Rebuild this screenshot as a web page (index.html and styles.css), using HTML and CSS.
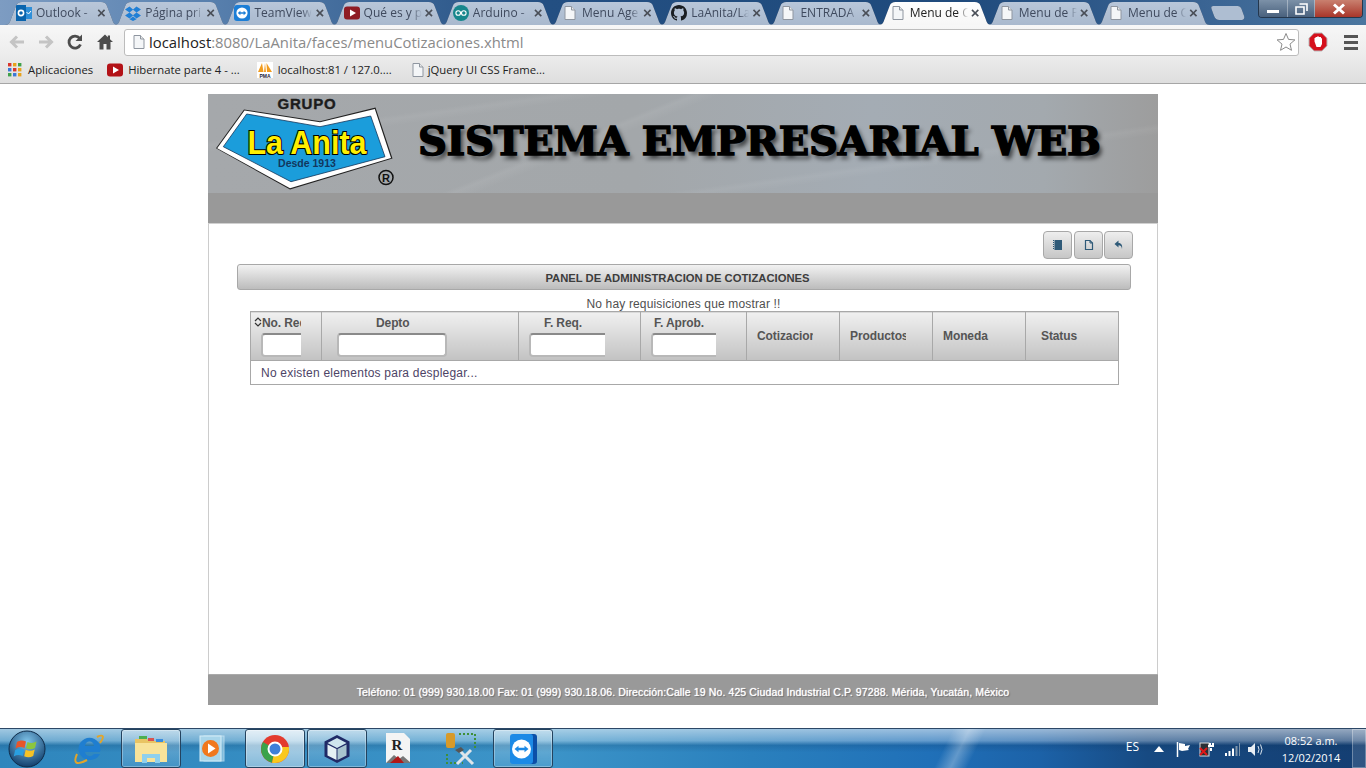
FILE: index.html
```html
<!DOCTYPE html>
<html lang="es">
  <head>
    <meta charset="UTF-8" />
    <title>Menu de Cotizaciones</title>
    <link rel="stylesheet" href="styles.css">
  </head>
  <body>
    <svg class="defs" width="0" height="0">
      <symbol id="doc" viewBox="0 0 16 16">
        <path d="M3 1.500h6.500L13 5v9.500H3z" fill="#f4f6f8" stroke="#8f96a0"/>
        <path d="M9.500 1.500V5H13" fill="#e8e8e8" stroke="#8f96a0"/>
      </symbol>
    </svg>

    <!-- browser tabs -->
    <div class="titlebar">
      <div class="tabs">
        <div class="tab">
          <svg class="fav" viewBox="0 0 16 16"><rect x="6" y="2" width="10" height="12" fill="#2f8fd8"/><rect width="10" height="16" y="0" fill="#0a64ad"/><circle cx="5" cy="8" r="2.600" fill="none" stroke="#fff" stroke-width="1.600"/><path d="M10.500 7l2 2 2.500-3" fill="none" stroke="#fff"/></svg>
          <span class="tab-title">Outlook - </span><span class="tab-x">×</span>
        </div>
        <div class="tab">
          <svg class="fav" viewBox="0 0 16 16"><path d="M4.500 1.500L0 4.500l4.500 3-4.500 3 4.500 3L8 10.500l3.500 3 4.500-3-4.500-3 4.500-3-4.500-3L8 4.500zM8 4.700l3.500 2.800L8 10.300 4.500 7.500z" fill="#1f7fd6"/><path d="M4.500 14.300L8 11.500l3.500 2.800L8 16z" fill="#1f7fd6"/></svg>
          <span class="tab-title">Página pri</span><span class="tab-x">×</span>
        </div>
        <div class="tab">
          <svg class="fav" viewBox="0 0 16 16"><rect width="16" height="16" rx="3" fill="#1c7ed6"/><circle cx="8" cy="8" r="5.600" fill="#fff"/><path d="M3.800 8l2.600-2.200v1.400h3.200V5.800L12.200 8 9.600 10.200V8.800H6.400v1.400z" fill="#1c7ed6"/></svg>
          <span class="tab-title">TeamView</span><span class="tab-x">×</span>
        </div>
        <div class="tab">
          <svg class="fav" viewBox="0 0 16 16"><rect y="1.500" width="16" height="13" rx="3" fill="#8f1c24"/><path d="M6 4.500l6 3.500-6 3.500z" fill="#fff"/></svg>
          <span class="tab-title">Qué es y p</span><span class="tab-x">×</span>
        </div>
        <div class="tab">
          <svg class="fav" viewBox="0 0 16 16"><circle cx="8" cy="8" r="8" fill="#17868c"/><circle cx="5.200" cy="8" r="2.300" fill="none" stroke="#fff" stroke-width="1.100"/><circle cx="10.800" cy="8" r="2.300" fill="none" stroke="#fff" stroke-width="1.100"/></svg>
          <span class="tab-title">Arduino - </span><span class="tab-x">×</span>
        </div>
        <div class="tab"><svg class="fav"><use href="#doc"/></svg><span class="tab-title">Menu Age</span><span class="tab-x">×</span></div>
        <div class="tab">
          <svg class="fav" viewBox="0 0 16 16"><path fill="#1b1f23" d="M8 0C3.580 0 0 3.580 0 8c0 3.540 2.290 6.530 5.470 7.590.4.070.55-.17.55-.38 0-.19-.01-.82-.01-1.490-2.010.37-2.530-.49-2.690-.94-.09-.23-.48-.94-.82-1.130-.28-.15-.68-.52-.01-.53.63-.01 1.080.58 1.230.82.72 1.210 1.870.87 2.330.66.070-.52.28-.87.51-1.070-1.780-.2-3.640-.89-3.640-3.950 0-.87.31-1.590.82-2.150-.08-.2-.36-1.020.08-2.120 0 0 .67-.21 2.200.82.64-.18 1.320-.27 2-.27.68 0 1.360.09 2 .27 1.530-1.040 2.200-.82 2.200-.82.44 1.100.16 1.920.08 2.120.51.56.82 1.270.82 2.150 0 3.070-1.870 3.750-3.650 3.950.29.25.54.73.54 1.480 0 1.070-.01 1.930-.01 2.200 0 .21.15.46.55.38A8.013 8.013 0 0016 8c0-4.420-3.580-8-8-8z"/></svg>
          <span class="tab-title">LaAnita/La</span><span class="tab-x">×</span>
        </div>
        <div class="tab"><svg class="fav"><use href="#doc"/></svg><span class="tab-title">ENTRADA</span><span class="tab-x">×</span></div>
        <div class="tab active"><svg class="fav"><use href="#doc"/></svg><span class="tab-title">Menu de C</span><span class="tab-x">×</span></div>
        <div class="tab"><svg class="fav"><use href="#doc"/></svg><span class="tab-title">Menu de P</span><span class="tab-x">×</span></div>
        <div class="tab"><svg class="fav"><use href="#doc"/></svg><span class="tab-title">Menu de C</span><span class="tab-x">×</span></div>
        <div class="new-tab"></div>
      </div>
      <div class="win-controls">
        <div class="win-btn win-min"><span></span></div>
        <div class="win-btn win-max">
          <svg width="13" height="12" viewBox="0 0 13 12"><path d="M4.500 1h7.500v7M1 4h8v7H1z" fill="none" stroke="#fff" stroke-width="1.600"/></svg>
        </div>
        <div class="win-btn win-close">
          <svg width="18" height="12" viewBox="0 0 18 12"><path d="M4 1.500l10 9M14 1.500l-10 9" stroke="#fff" stroke-width="3"/></svg>
        </div>
      </div>
    </div>

    <!-- toolbar -->
    <div class="toolbar">
      <svg class="nav-icon" viewBox="0 0 20 20"><path d="M17 10H5M10 4.500L4.500 10l5.500 5.500" fill="none" stroke="#c4c4c4" stroke-width="3"/></svg>
      <svg class="nav-icon" viewBox="0 0 20 20"><path d="M3 10h12M10 4.500l5.500 5.500-5.500 5.500" fill="none" stroke="#c4c4c4" stroke-width="3"/></svg>
      <svg class="nav-icon" viewBox="0 0 20 20"><path d="M15.500 12.500a6 6 0 1 1-.8-6.200" fill="none" stroke="#4c4c4c" stroke-width="2.800"/><path d="M17 2.500V9h-6.500z" fill="#4c4c4c"/></svg>
      <svg class="nav-icon home-icon" viewBox="0 0 20 20"><path d="M10 2.500L2 10h2.500v7.500h4V12h3v5.500h4V10H18l-3-2.800V3.500h-2.200v1.700z" fill="#4c4c4c"/></svg>
      <div class="omnibox">
        <svg class="omni-doc"><use href="#doc"/></svg>
        <span class="url"><b>localhost</b>:8080/LaAnita/faces/menuCotizaciones.xhtml</span>
        <svg class="star" viewBox="0 0 20 20"><path d="M10 1.500l2.500 5.900 6.400.5-4.900 4.200 1.500 6.200L10 15l-5.500 3.300L6 12.100 1.100 7.900l6.400-.5z" fill="#fff" stroke="#8a8a8a"/></svg>
      </div>
      <svg class="adblock" viewBox="0 0 20 20"><path d="M6.200 1h7.600L19 6.200v7.600L13.800 19H6.200L1 13.800V6.200z" fill="#d5101c" stroke="#b9b9b9"/><path d="M6.500 9.500V6h1V5h1.500v-.500h2V5H13v1.200h1v5.800l-1.500 3h-4z" fill="#fff"/></svg>
      <div class="menu-icon"><span></span><span></span><span></span></div>
    </div>

    <!-- bookmarks -->
    <div class="bookmarks">
      <div class="bookmark bm-apps">
        <svg class="bm-ico" viewBox="0 0 14 14">
          <rect width="3.400" height="3.400" fill="#d9352c"/><rect x="5" width="3.400" height="3.400" fill="#e8a21c"/><rect x="10" width="3.400" height="3.400" fill="#3fa14a"/>
          <rect y="5" width="3.400" height="3.400" fill="#3a78d8"/><rect x="5" y="5" width="3.400" height="3.400" fill="#d9352c"/><rect x="10" y="5" width="3.400" height="3.400" fill="#e8a21c"/>
          <rect y="10" width="3.400" height="3.400" fill="#3fa14a"/><rect x="5" y="10" width="3.400" height="3.400" fill="#3a78d8"/><rect x="10" y="10" width="3.400" height="3.400" fill="#e8a21c"/>
        </svg>
        Aplicaciones
      </div>
      <div class="bookmark bm-yt">
        <svg class="bm-ico" viewBox="0 0 16 16"><rect y="1.500" width="16" height="13" rx="3" fill="#b31217"/><path d="M6 4.500l6 3.500-6 3.500z" fill="#fff"/></svg>
        Hibernate parte 4 - ...
      </div>
      <div class="bookmark bm-pma">
        <svg class="bm-ico" viewBox="0 0 16 16"><rect width="16" height="16" fill="#fff"/><path d="M1 10L5 1l1.500 9zM7 10l1-9 1 9zM10 10L9.500 1 15 10z" fill="#f29c1f"/><text x="8" y="15.500" class="pma-text">PMA</text></svg>
        localhost:81 / 127.0....
      </div>
      <div class="bookmark bm-jq"><svg class="bm-ico"><use href="#doc"/></svg>jQuery UI CSS Frame...</div>
    </div>

    <!-- page -->
    <div class="viewport">
      <div class="page">
        <header class="banner">
          <svg class="logo" width="190" height="99" viewBox="0 0 190 99">
            <text x="99" y="15" class="logo-grupo">GRUPO</text>
            <path d="M8 54.300L36 15.500 112 27.200 167.500 13.500l17 51L82 95.500z" fill="#222"/>
            <path d="M9.200 54.300L36.500 16.500 112 28.200 166.800 14.900l16.200 49L82 94.200z" fill="#fff"/>
            <path d="M15.300 52.700L38.700 20 112 32.700 162.700 22 177 62.700 83 87.700z" fill="#1b9ddb" stroke="#14365a" stroke-width=".8"/>
            <text x="99" y="59.500" class="logo-name" textLength="119" lengthAdjust="spacingAndGlyphs">La Anita</text>
            <text x="99" y="73" class="logo-since">Desde 1913</text>
            <circle cx="178" cy="83.500" r="7" fill="none" stroke="#111" stroke-width="1.500"/>
            <text x="178" y="87.500" class="logo-reg">R</text>
          </svg>
          <h1 class="banner-title">SISTEMA EMPRESARIAL WEB</h1>
        </header>
        <div class="subbar"></div>

        <main class="content">
          <div class="actions">
            <button class="act-btn">
              <svg viewBox="0 0 12 12"><rect x="2.500" y="1" width="7.500" height="10" fill="#2f5a78"/><path d="M1.500 1v10" stroke="#2f5a78" stroke-dasharray="1 1"/></svg>
            </button>
            <button class="act-btn">
              <svg viewBox="0 0 12 12"><path d="M2.500 1.500h4.500l2.500 2.500v6.500h-7z" fill="none" stroke="#2f5a78" stroke-width="1.200"/><path d="M7 1.500V4h2.500" fill="none" stroke="#2f5a78"/></svg>
            </button>
            <button class="act-btn">
              <svg viewBox="0 0 12 12"><path d="M5.500 1.500L1.500 5l4 3.500V6.300c2 0 3 .7 3.500 3.700.7-3.500-.5-6-3.500-6z" fill="#2f5a78"/></svg>
            </button>
          </div>

          <h2 class="panel-head">PANEL DE ADMINISTRACION DE COTIZACIONES</h2>
          <p class="notice">No hay requisiciones que mostrar !!</p>

          <table class="grid">
            <colgroup>
              <col class="c-req"><col class="c-depto"><col class="c-freq"><col class="c-faprob">
              <col class="c-std"><col class="c-std"><col class="c-std"><col class="c-std">
            </colgroup>
            <thead>
              <tr>
                <th>
                  <div class="filter f-req">
                    <span class="col-name"><svg class="sort" viewBox="0 0 8 10"><path d="M1 4l3-3 3 3M1 6l3 3 3-3" fill="none" stroke="#333" stroke-width="1.200"/></svg>No. Req</span>
                    <input class="filter-in" type="text">
                  </div>
                </th>
                <th>
                  <div class="filter f-depto">
                    <span class="col-name">Depto</span>
                    <input class="filter-in" type="text">
                  </div>
                </th>
                <th>
                  <div class="filter f-freq">
                    <span class="col-name">F. Req.</span>
                    <input class="filter-in" type="text">
                  </div>
                </th>
                <th>
                  <div class="filter f-faprob">
                    <span class="col-name">F. Aprob.</span>
                    <input class="filter-in" type="text">
                  </div>
                </th>
                <th><div class="plain p-clip">Cotizacion</div></th>
                <th><div class="plain p-clip">Productos</div></th>
                <th><div class="plain">Moneda</div></th>
                <th><div class="plain p-status">Status</div></th>
              </tr>
            </thead>
            <tbody>
              <tr><td colspan="8">No existen elementos para desplegar...</td></tr>
            </tbody>
          </table>
        </main>

        <footer class="page-foot">Teléfono: 01 (999) 930.18.00 Fax: 01 (999) 930.18.06. Dirección:Calle 19 No. 425 Ciudad Industrial C.P. 97288. Mérida, Yucatán, México</footer>
      </div>
    </div>

    <!-- windows taskbar -->
    <div class="taskbar">
      <div class="orb">
        <svg width="38" height="38" viewBox="0 0 38 38">
          <defs>
            <radialGradient id="orbFill" cx="50%" cy="30%" r="70%"><stop offset="0" stop-color="#7fc4ea"/><stop offset="1" stop-color="#123f6d"/></radialGradient>
          </defs>
          <circle cx="19" cy="19" r="18" fill="url(#orbFill)" stroke="#0f2c4a"/>
          <path d="M9 12c3-2 6-2 9-.5L16.500 18c-3-1.300-6-1.300-9 .5z" fill="#e8562a"/>
          <path d="M19.500 12c3 1.300 6 1.300 9-.5L27 18c-3 1.500-6 1.500-9 .3z" fill="#8cc63f"/>
          <path d="M7.200 20c3-1.700 6-1.700 9-.5L14.700 26c-3-1.300-6-1.300-9 .5z" fill="#2a9fe0"/>
          <path d="M17.700 19.800c3 1.300 6 1.300 9-.3L25.200 26c-3 1.500-6 1.500-9 .3z" fill="#f7c325"/>
        </svg>
      </div>
      <div class="task-slot ie-slot">
        <svg width="32" height="34" viewBox="0 0 32 34">
          <path d="M6 20a11 11 0 1 1 21 0H12a5 5 0 0 0 9 2h6a11.500 11.500 0 0 1-21-2zM12 14h9a4.500 4.500 0 0 0-9 0z" fill="#1f7ed0" fill-rule="evenodd"/>
          <path d="M24 5c6-3 8-1 3 6M4 22C0 31 3 34 14 28" fill="none" stroke="#e2a52a" stroke-width="2"/>
        </svg>
      </div>
      <div class="task-slot open">
        <svg width="34" height="30" viewBox="0 0 34 30">
          <path d="M1 5h12l2 2h16v21H1z" fill="#e9c463"/>
          <path d="M1 9h32v19H1z" fill="#f8e39a"/>
          <rect x="5" y="2" width="8" height="3" fill="#4caf50"/><rect x="14" y="4" width="6" height="3" fill="#d9534f"/><rect x="22" y="5" width="7" height="3" fill="#3a8dde"/>
          <path d="M8 29v-9h18v9h-5v-5h-8v5z" fill="#8ed0ee"/>
        </svg>
      </div>
      <div class="task-slot">
        <svg width="30" height="30" viewBox="0 0 30 30">
          <rect x="6" y="2" width="20" height="25" fill="#9fd0e8" opacity=".7" stroke="#d5edf8"/>
          <rect x="2" y="2" width="21" height="25" fill="#a8d5ea" stroke="#d5edf8"/>
          <circle cx="12.500" cy="14.500" r="8.500" fill="#f0781e"/>
          <path d="M10 9.500l7.500 5-7.500 5z" fill="#fff"/>
        </svg>
      </div>
      <div class="task-slot open active-app">
        <svg width="30" height="30" viewBox="0 0 30 30">
          <circle cx="15" cy="15" r="14" fill="#e33b2e"/>
          <path d="M15 15L3 8A14 14 0 0 0 12 28.700z" fill="#3aa34a"/>
          <path d="M15 15l-3 13.700A14 14 0 0 0 28.900 13H15z" fill="#f9c81e"/>
          <circle cx="15" cy="15" r="6.500" fill="#3f7fd9" stroke="#fff" stroke-width="2"/>
        </svg>
      </div>
      <div class="task-slot open">
        <svg width="32" height="32" viewBox="0 0 32 32">
          <path d="M16 2l12.500 6.500v15L16 30 3.500 23.500v-15z" fill="#1f2a66"/>
          <path d="M16 5l9.500 5L16 15 6.500 10z" fill="#cfe6ee"/>
          <path d="M6.500 11.500L15.500 16v11L6.500 22.500z" fill="#e6f1f4"/>
          <path d="M25.500 11.500L16.500 16v11l9-4.500z" fill="#a9c4cf"/>
        </svg>
      </div>
      <div class="task-slot">
        <svg width="30" height="36" viewBox="0 0 30 36">
          <path d="M2 2h18l6 6v24H2z" fill="#f4f4f4"/>
          <text x="13" y="19" class="r-doc">R</text>
          <path d="M2 32l8-8 5 4 4-3 8 7z" fill="#777"/>
          <path d="M6 32l8-7 6 7z" fill="#b01818"/>
        </svg>
      </div>
      <div class="task-slot">
        <svg width="32" height="34" viewBox="0 0 32 34">
          <rect x="1" y="1" width="9" height="15" rx="2" fill="#d79a2a"/>
          <path d="M14 2h16v14M2 22v9h16" fill="none" stroke="#3f8f3a" stroke-width="2" stroke-dasharray="2 2"/>
          <path d="M12 32l14-14M14 18l14 14" stroke="#dfe5ea" stroke-width="3"/>
          <path d="M10 18l6-3 3 3-5 3z" fill="#555"/>
        </svg>
      </div>
      <div class="task-slot open">
        <svg width="28" height="32" viewBox="0 0 28 32">
          <rect x="4" y="1" width="24" height="30" rx="3" fill="#0b4fa8"/>
          <rect x="1" y="1" width="23" height="30" rx="3" fill="#1c8ae6"/>
          <circle cx="12.500" cy="16" r="9.500" fill="#fff"/>
          <path d="M5.500 16l4-3.300v2h6v-2l4 3.300-4 3.300v-2h-6v2z" fill="#1c8ae6"/>
        </svg>
      </div>

      <div class="tray">
        <span class="tray-lang">ES</span>
        <svg class="tray-ico tray-arrow" width="10" height="6" viewBox="0 0 10 6"><path d="M5 0l5 6H0z" fill="#fff"/></svg>
        <svg class="tray-ico tray-flag" width="16" height="15" viewBox="0 0 16 15"><path d="M1.500 0v15" stroke="#fff" stroke-width="1.500"/><path d="M3 1l6 1v2l5-1-2 4 1 1-7 1-3-1z" fill="#fff"/></svg>
        <svg class="tray-ico tray-power" width="16" height="16" viewBox="0 0 16 16"><rect x="1" y="2" width="9" height="13" fill="#2a2f36" stroke="#ddd"/><path d="M9 5h6M11 2v4M14 2v4M12 7v3" stroke="#fff" stroke-width="2"/><path d="M1 7l7 7M8 7l-7 7" stroke="#e01818" stroke-width="2"/></svg>
        <svg class="tray-ico" width="16" height="13" viewBox="0 0 16 13"><path d="M1 10h2v3H1zM4.500 8h2v5h-2zM8 5.500h2V13H8z" fill="#fff"/><path d="M11.500 3h2v10h-2zM15 0h1v13h-1z" fill="#7f95ab"/></svg>
        <svg class="tray-ico" width="15" height="15" viewBox="0 0 15 15"><path d="M0 5h3l4-4v13l-4-4H0z" fill="#e8eef4"/><path d="M10 4q2 3.500 0 7M12.500 2.500q3 5 0 10" fill="none" stroke="#dbe5ee"/></svg>
        <div class="clock"><span>08:52 a.m.</span><span>12/02/2014</span></div>
        <div class="show-desktop"></div>
      </div>
    </div>
  </body>
</html>
```

FILE: styles.css
```css
* {
  box-sizing: border-box;
}
html, body {
  margin: 0;
  height: 100%;
}
body {
  width: 1366px;
  height: 768px;
  overflow: hidden;
  display: flex;
  flex-direction: column;
  background-color: #fff;
  font-family: "Liberation Sans", Arial, sans-serif;
}
.defs {
  display: block;
  height: 0;
}

/* ---- browser chrome ---- */
.titlebar {
  height: 25px;
  flex: none;
  display: flex;
  justify-content: space-between;
  background: linear-gradient(90deg, #7d9cc2 0, #5f86b3 12%, #234f82 40%, #1f4a7c 70%, #3a6493 88%, #4b769f 100%);
}
.tabs {
  display: flex;
  align-items: flex-end;
  padding-left: 5px;
  filter: drop-shadow(0 0 .7px rgba(40, 55, 80, .9));
}
.tab {
  position: relative;
  width: 113px;
  height: 25px;
  margin-right: -3.8px;
  padding: 5px 0 0 11px;
  display: flex;
  align-items: flex-start;
  flex: none;
  background: linear-gradient(180deg, #bac8da, #a9b9ce);
  clip-path: path("M0 25C4 25 5 22 6 19L11 6C12 3 14 2 17 2L96 2C99 2 101 3 102 6L107 19C108 22 109 25 113 25Z");
}
.tab.active {
  z-index: 2;
  background: linear-gradient(180deg, #fff, #f6f6f6);
}
.fav {
  width: 16px;
  height: 16px;
  flex: none;
}
.tab-title {
  width: 58px;
  margin-left: 4px;
  font: 12px/16px "Open Sans", sans-serif;
  color: #3f4a5e;
  white-space: nowrap;
  overflow: hidden;
  -webkit-mask-image: linear-gradient(90deg, #000 82%, transparent 100%);
  mask-image: linear-gradient(90deg, #000 82%, transparent 100%);
}
.tab.active .tab-title {
  color: #222;
}
.tab-x {
  margin-left: 3px;
  font: bold 15px/16px "Liberation Sans", sans-serif;
  color: #4a4f58;
}
.new-tab {
  width: 30px;
  height: 14px;
  margin: 0 0 5px 7px;
  flex: none;
  background: #aebed2;
  border-radius: 3px 3px 4px 4px;
  transform: skewX(20deg);
}
.win-controls {
  width: 105px;
  height: 18px;
  margin-right: 3px;
  display: flex;
  border: 1px solid #24374d;
  border-top: none;
  border-radius: 0 0 4px 4px;
  overflow: hidden;
}
.win-btn {
  display: flex;
  align-items: center;
  justify-content: center;
  border-right: 1px solid rgba(255, 255, 255, .35);
  background: linear-gradient(180deg, #7c91a8, #49617d);
}
.win-min {
  width: 29px;
}
.win-min span {
  width: 12px;
  height: 3px;
  margin-top: 6px;
  background: #fff;
}
.win-max {
  width: 27px;
}
.win-close {
  flex: 1;
  border-right: none;
  background: linear-gradient(180deg, #c9806f, #a8362a);
}

.toolbar {
  height: 31px;
  flex: none;
  display: flex;
  align-items: center;
  padding: 3px 6px 0 7px;
  background: linear-gradient(180deg, #f7f7f7, #ececec);
}
.nav-icon {
  width: 20px;
  height: 20px;
  margin-right: 9px;
  flex: none;
}
.home-icon {
  margin-left: 1px;
}
.omnibox {
  flex: none;
  width: 1175px;
  height: 27px;
  display: flex;
  align-items: center;
  padding: 0 2px 0 6px;
  background: #fff;
  border: 1px solid #bcbcbc;
  border-radius: 3px;
}
.omni-doc {
  width: 16px;
  height: 16px;
  flex: none;
}
.url {
  margin-left: 2px;
  flex: 1;
  font: 14.850px/20px "Open Sans", sans-serif;
  color: #8a8a8a;
  white-space: nowrap;
}
.url b {
  font-weight: normal;
  color: #222;
}
.star {
  width: 20px;
  height: 20px;
}
.adblock {
  width: 20px;
  height: 20px;
  margin-left: 9px;
  flex: none;
}
.menu-icon {
  margin-left: 16px;
  width: 14px;
  display: flex;
  flex-direction: column;
  gap: 3px;
}
.menu-icon span {
  height: 3px;
  background: #555;
}

.bookmarks {
  height: 28px;
  flex: none;
  display: flex;
  align-items: center;
  padding-left: 8px;
  background: linear-gradient(180deg, #ececec, #dedede);
  border-bottom: 1px solid #a6a6a6;
  font: 11.300px/16px "Open Sans", sans-serif;
  color: #222;
}
.bookmark {
  display: flex;
  align-items: center;
  white-space: nowrap;
}
.bm-ico {
  width: 16px;
  height: 16px;
  margin-right: 5px;
  flex: none;
}
.bm-apps .bm-ico {
  width: 14px;
  height: 14px;
  margin-right: 6px;
}
.bm-yt {
  margin-left: 14px;
}
.bm-pma {
  margin-left: 17px;
}
.bm-jq {
  margin-left: 18px;
}
.bm-jq .bm-ico {
  margin-right: 2px;
}
.pma-text {
  font: bold 5px "Liberation Sans", sans-serif;
  text-anchor: middle;
  fill: #223;
}

/* ---- page ---- */
.viewport {
  flex: 1;
  padding-top: 10px;
  display: flex;
  justify-content: center;
  background: #fff;
}
.page {
  width: 950px;
  height: 611px;
  display: flex;
  flex-direction: column;
}
.banner {
  height: 99px;
  flex: none;
  display: flex;
  align-items: flex-start;
  background:
    linear-gradient(158deg, transparent 40%, rgba(255, 255, 255, .06) 41%, transparent 43%),
    linear-gradient(172deg, transparent 20%, rgba(255, 255, 255, .05) 22%, transparent 25%, transparent 70%, rgba(255, 255, 255, .05) 72%, transparent 75%),
    linear-gradient(90deg, #a5a8ab 0, #a3a7aa 45%, #a4acb4 70%, #a3a9ae 88%, #9d9d9d 100%);
}
.logo {
  flex: none;
}
.banner-title {
  margin: 25px 0 0 20px;
  font: bold 40px/44px "DejaVu Serif", serif;
  color: #000;
  white-space: nowrap;
  letter-spacing: -.27px;
  -webkit-text-stroke: 1.500px #000;
  text-shadow: 3px 4px 4px rgba(0, 0, 0, .6);
}
.logo-grupo {
  font: bold 15px "Liberation Sans", sans-serif;
  letter-spacing: .8px;
  text-anchor: middle;
  fill: #1c1c1c;
  stroke: #1c1c1c;
  stroke-width: .4;
}
.logo-name {
  font: bold 34px "Liberation Sans", sans-serif;
  text-anchor: middle;
  fill: #ffef00;
  stroke: #000;
  stroke-width: 2.200;
  paint-order: stroke;
}
.logo-since {
  font: bold 10.500px "Liberation Sans", sans-serif;
  text-anchor: middle;
  fill: #12375e;
}
.logo-reg {
  font: bold 11px "Liberation Sans", sans-serif;
  text-anchor: middle;
  fill: #111;
}
.subbar {
  height: 31px;
  flex: none;
  background: #999;
  border-bottom: 1px solid #d0d0d0;
}
.content {
  flex: 1;
  padding-top: 7px;
  background: #fff;
  border-left: 1px solid #ccc;
  border-right: 1px solid #ccc;
  font-size: 12px;
  color: #4f4f4f;
}
.actions {
  height: 28px;
  display: flex;
  justify-content: flex-end;
  gap: 1px;
  padding-right: 24px;
}
.act-btn {
  width: 29px;
  height: 28px;
  padding: 0;
  display: flex;
  align-items: center;
  justify-content: center;
  background: linear-gradient(180deg, #eee, #c6c6c6);
  border: 1px solid #a8a8a8;
  border-radius: 4px;
}
.act-btn:first-child {
  margin-right: 1px;
}
.act-btn svg {
  width: 12px;
  height: 12px;
}
.panel-head {
  height: 26px;
  margin: 5px 26px 0 28px;
  padding-right: 13px;
  font: bold 11.250px/26px "Liberation Sans", sans-serif;
  text-align: center;
  color: #3d3d3d;
  background: linear-gradient(180deg, #f2f2f2, #bcbcbc);
  border: 1px solid #a8a8a8;
  border-radius: 3px;
}
.notice {
  height: 21px;
  margin: 0;
  padding-top: 7px;
  font: 12px/15px "Liberation Sans", sans-serif;
  text-align: center;
  letter-spacing: .15px;
  margin-left: 1px;
}
.grid {
  width: 869px;
  margin-left: 41px;
  table-layout: fixed;
  border-collapse: collapse;
}
.c-req { width: 71px; }
.c-depto { width: 197px; }
.c-freq { width: 122px; }
.c-faprob { width: 106px; }
.c-std { width: 93px; }
.grid th {
  height: 49px;
  padding: 0;
  vertical-align: top;
  text-align: left;
  font: bold 12px/15px "Liberation Sans", sans-serif;
  letter-spacing: -.1px;
  color: #555;
  background: linear-gradient(180deg, #f0f0f0, #c2c2c2);
  border: 1px solid #a8a8a8;
}
.grid td {
  height: 24px;
  padding: 2px 0 0 10px;
  font: 12px/15px "Liberation Sans", sans-serif;
  letter-spacing: .22px;
  color: #4d4466;
  border: 1px solid #a8a8a8;
}
.filter {
  display: flex;
  flex-direction: column;
  overflow: hidden;
  padding-top: 4px;
}
.col-name {
  height: 16px;
  padding-top: 0;
  white-space: nowrap;
}
.sort {
  width: 8px;
  height: 10px;
}
.filter-in {
  height: 24px;
  flex: none;
  padding: 0;
  margin-top: 1px;
  background: #fff;
  border: 2px solid #b8b8b8;
  border-top-color: #8a8a8a;
  border-radius: 4px;
}
.f-req {
  width: 47px;
  margin-left: 3px;
}
.f-req .filter-in {
  width: 60px;
  margin-left: 7px;
}
.f-depto {
  width: 110px;
  margin-left: 15px;
}
.f-depto .col-name {
  padding-left: 39px;
}
.f-freq {
  width: 76px;
  margin-left: 10px;
}
.f-freq .col-name {
  padding-left: 15px;
}
.f-freq .filter-in {
  width: 90px;
}
.f-faprob {
  width: 65px;
  margin-left: 10px;
}
.f-faprob .col-name {
  padding-left: 3px;
}
.f-faprob .filter-in {
  width: 90px;
}
.plain {
  margin-left: 10px;
  padding-top: 1px;
  line-height: 47px;
  white-space: nowrap;
}
.p-clip {
  width: 56px;
  overflow: hidden;
}
.p-status {
  margin-left: 15px;
}
.page-foot {
  height: 31px;
  flex: none;
  font: 10.500px/34px "Liberation Sans", sans-serif;
  letter-spacing: .12px;
  color: #fff;
  text-align: center;
  background: #999;
  border-top: 1px solid #aaa;
  text-shadow: 0 0 1px #fff, 1px 1px 1px rgba(60, 60, 60, .6);
}

/* ---- taskbar ---- */
.taskbar {
  height: 40px;
  flex: none;
  display: flex;
  align-items: center;
  border-top: 1px solid #2c4766;
  background:
    linear-gradient(116deg, transparent 68.800%, rgba(255, 255, 255, .3) 70%, transparent 71.200%),
    linear-gradient(180deg, rgba(255, 255, 255, .55) 0, rgba(255, 255, 255, .3) 30%, rgba(10, 50, 90, .18) 42%, rgba(255, 255, 255, 0) 60%),
    linear-gradient(90deg, #2f86bd 0, #3c94c8 40%, #2a80bd 55%, #2070b8 68%, #1c62a8 76%, #174a82 84%, #143e72 100%);
}
.orb {
  width: 57px;
  padding-left: 8px;
  flex: none;
  display: flex;
}
.task-slot {
  width: 60px;
  height: 39px;
  margin-right: 2px;
  flex: none;
  display: flex;
  align-items: center;
  justify-content: center;
}
.ie-slot {
  margin-left: 2px;
}
.task-slot.open {
  border: 1px solid #24435f;
  border-radius: 3px;
  background: linear-gradient(180deg, rgba(255, 255, 255, .32), rgba(255, 255, 255, .08));
  box-shadow: inset 0 0 0 1px rgba(255, 255, 255, .3);
}
.task-slot.active-app {
  background: linear-gradient(180deg, rgba(255, 255, 255, .7), rgba(255, 255, 255, .4));
}
.r-doc {
  font: bold 15px "Liberation Serif", serif;
  text-anchor: middle;
  fill: #222;
}
.tray {
  flex: 1;
  height: 39px;
  display: flex;
  align-items: center;
  justify-content: flex-end;
  gap: 8px;
  color: #fff;
  font: 11px/17px "Open Sans", sans-serif;
}
.tray-lang {
  margin-right: 7px;
  margin-bottom: 4px;
  font-size: 12px;
}
.tray-ico {
  flex: none;
  margin-top: 1px;
}
.tray-arrow {
  margin-right: 4px;
}
.tray-flag {
  margin-right: -1px;
}
.tray-power {
  margin-right: 1px;
}
.clock {
  width: 72px;
  margin: 0 -3px 0 4px;
  display: flex;
  flex-direction: column;
  align-items: center;
}
.show-desktop {
  width: 14px;
  height: 39px;
  background: rgba(255, 255, 255, .12);
  border: 1px solid rgba(255, 255, 255, .3);
}
```
